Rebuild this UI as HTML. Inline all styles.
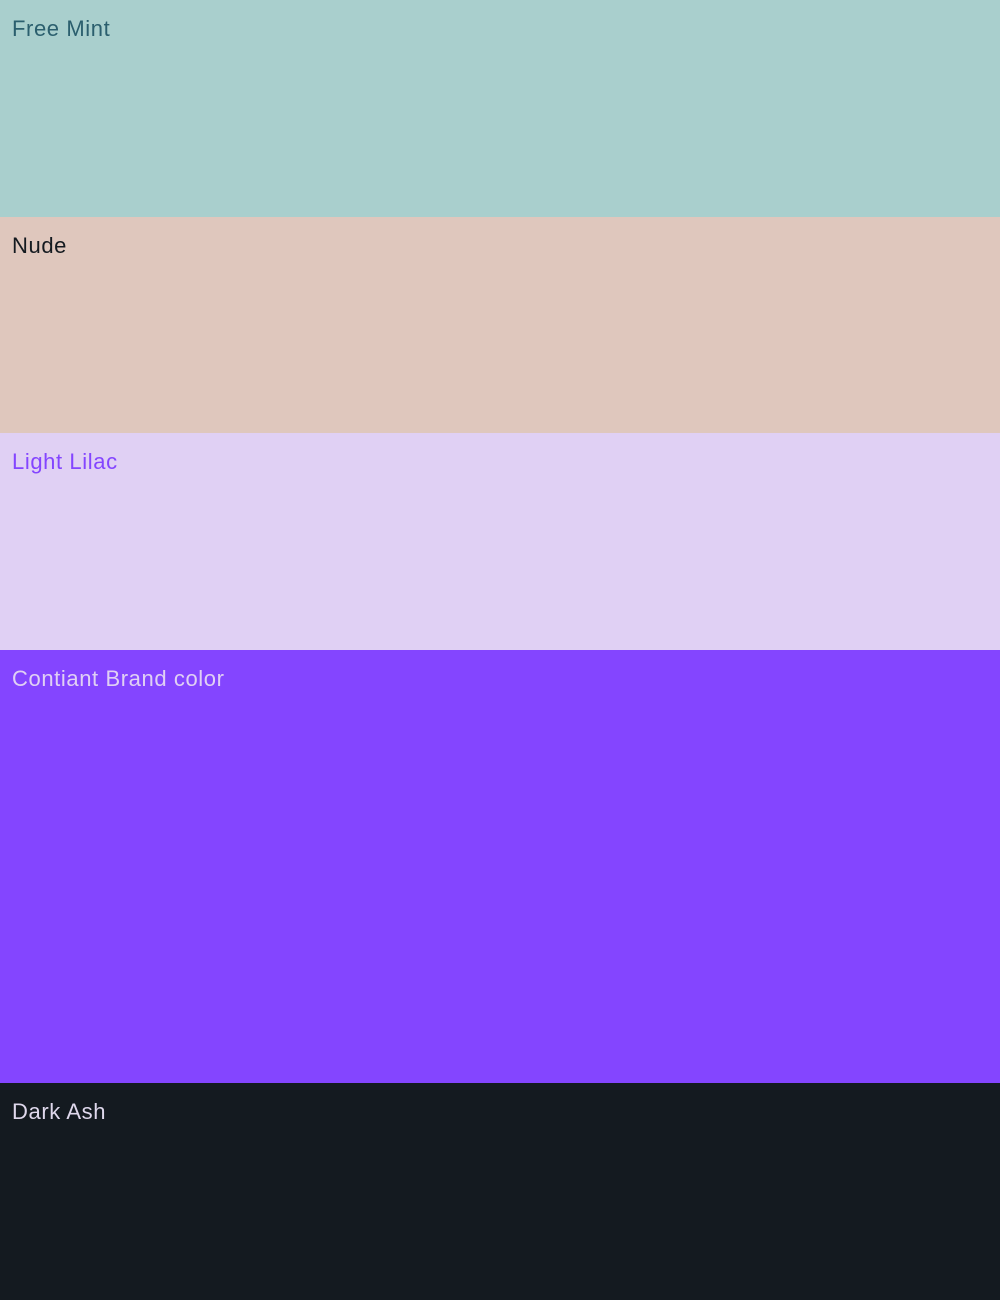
<!DOCTYPE html>
<html><head><meta charset="utf-8"><style>
html,body{margin:0;padding:0;width:1000px;height:1300px;overflow:hidden}
div{box-sizing:border-box;padding:15px 12px 0;font-family:"Liberation Sans",sans-serif;font-size:22px;line-height:28px;letter-spacing:0.6px}
</style></head><body>
<div style="height:217px;background:#a9cfcd;color:#2b5f6e">Free Mint</div>
<div style="height:216px;background:#dfc7bd;color:#141a20">Nude</div>
<div style="height:217px;background:#e0d0f4;color:#8445ff">Light Lilac</div>
<div style="height:433px;background:#8445ff;color:#e0d0f4">Contiant Brand color</div>
<div style="height:217px;background:#141a20;color:#dfd8ec">Dark Ash</div>
</body></html>
